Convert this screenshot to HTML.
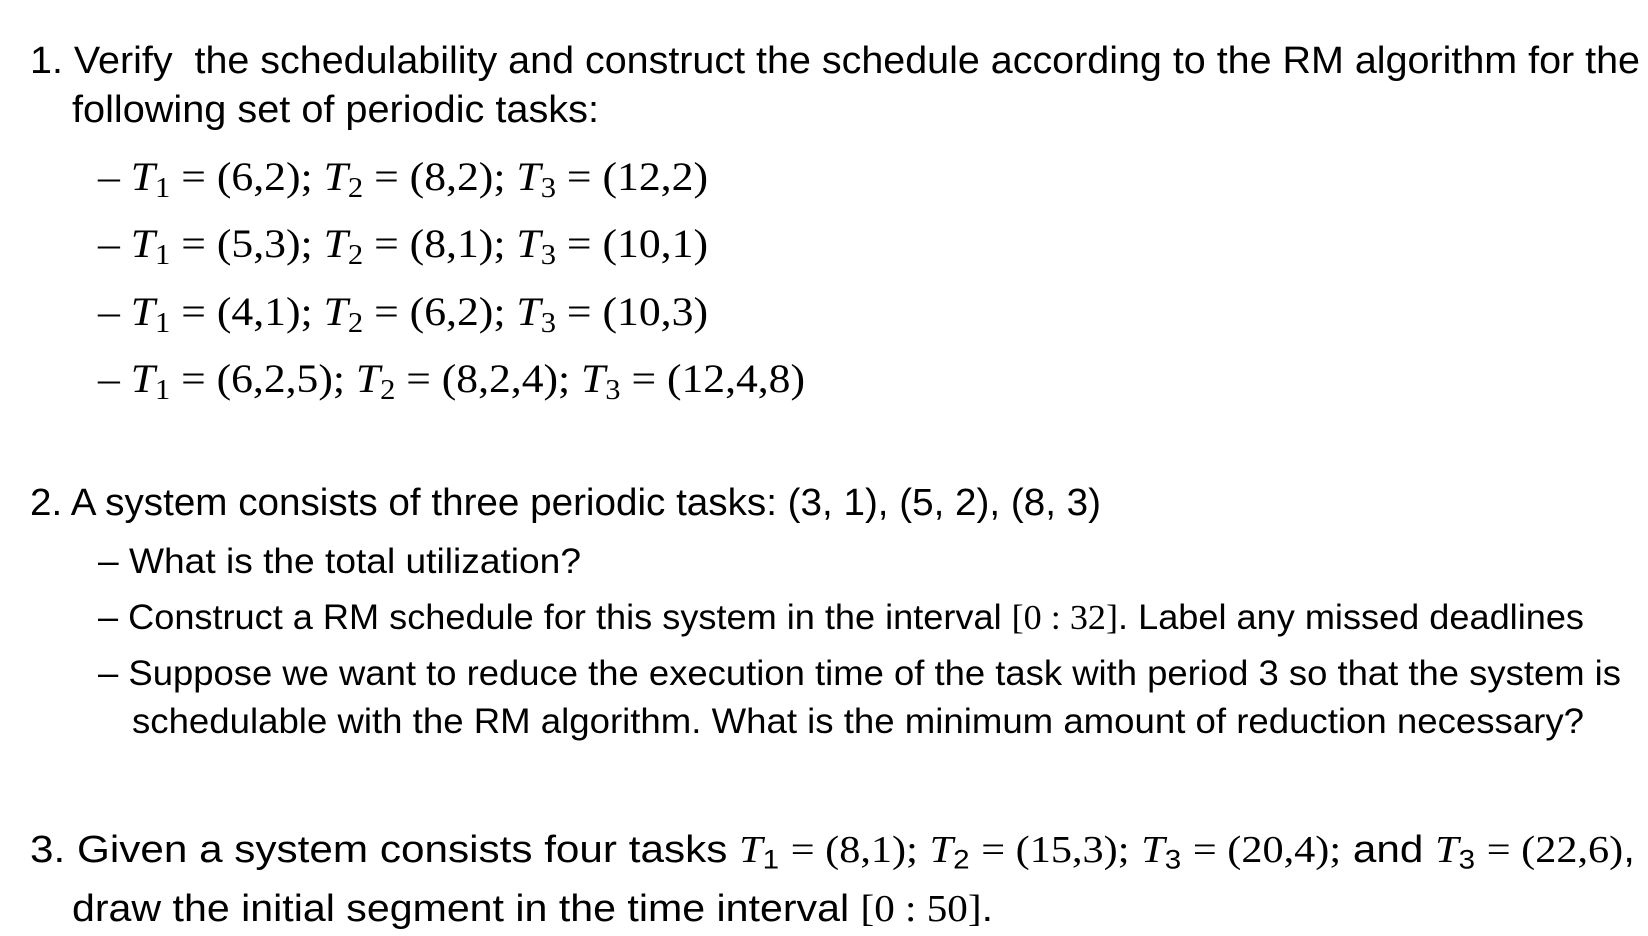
<!DOCTYPE html>
<html><head><meta charset="utf-8">
<style>
html,body{margin:0;padding:0;background:#fff;}
body{width:1648px;height:936px;position:relative;overflow:hidden;color:#000;}
.l{position:absolute;white-space:nowrap;line-height:1;font-family:"Liberation Sans",sans-serif;transform-origin:0 0;}
.m{font-family:"Liberation Serif",serif;}
i{font-family:"Liberation Serif",serif;font-style:italic;}
.s{font-family:"Liberation Serif",serif;}
sub{font-size:0.7em;vertical-align:-0.25em;line-height:0;}
</style></head><body>
<div class="l" style="left:30px;top:42px;font-size:38px">1. Verify&nbsp; the schedulability and construct the schedule according to the RM algorithm for the</div>
<div class="l" style="left:72px;top:91px;font-size:38px">following set of periodic tasks:</div>
<div class="l m" style="left:98px;top:157px;font-size:40px">– <i>T</i><sub>1</sub> = (6,2); <i>T</i><sub>2</sub> = (8,2); <i>T</i><sub>3</sub> = (12,2)</div>
<div class="l m" style="left:98px;top:224px;font-size:40px">– <i>T</i><sub>1</sub> = (5,3); <i>T</i><sub>2</sub> = (8,1); <i>T</i><sub>3</sub> = (10,1)</div>
<div class="l m" style="left:98px;top:292px;font-size:40px">– <i>T</i><sub>1</sub> = (4,1); <i>T</i><sub>2</sub> = (6,2); <i>T</i><sub>3</sub> = (10,3)</div>
<div class="l m" style="left:98px;top:359px;font-size:40px">– <i>T</i><sub>1</sub> = (6,2,5); <i>T</i><sub>2</sub> = (8,2,4); <i>T</i><sub>3</sub> = (12,4,8)</div>
<div class="l" style="left:30px;top:484px;font-size:38px">2. A system consists of three periodic tasks: (3, 1), (5, 2), (8, 3)</div>
<div class="l" style="left:98px;top:544px;font-size:35px">– What is the total utilization?</div>
<div class="l" style="left:98px;top:600px;font-size:35px">– Construct a RM schedule for this system in the interval <span class="s">[0 : 32]</span>. Label any missed deadlines</div>
<div class="l" style="left:98px;top:656px;font-size:35px">– Suppose we want to reduce the execution time of the task with period 3 so that the system is</div>
<div class="l" style="left:132px;top:704px;font-size:35px">schedulable with the RM algorithm. What is the minimum amount of reduction necessary?</div>
<div class="l" style="left:30px;top:831px;font-size:38px">3. Given a system consists four tasks <i>T</i><sub>1</sub> <span class="s">= (8,1);</span> <i>T</i><sub>2</sub> <span class="s">= (15,3);</span> <i>T</i><sub>3</sub> <span class="s">= (20,4);</span> and <i>T</i><sub>3</sub> <span class="s">= (22,6)</span>,</div>
<div class="l" style="left:72px;top:890px;font-size:38px">draw the initial segment in the time interval <span class="s">[0 : 50]</span>.</div>
<script>
var targets=[1640,599,708,708,708,805,1101,581,1584,1621,1584,1635,993];
var els=document.querySelectorAll('.l');
for(var i=0;i<els.length;i++){
  var e=els[i];var w=e.getBoundingClientRect().width;var left=parseFloat(e.style.left);
  var tw=targets[i]-left; if(w>0){e.style.transform='scaleX('+(tw/w)+')';}
}
</script>
</body></html>
